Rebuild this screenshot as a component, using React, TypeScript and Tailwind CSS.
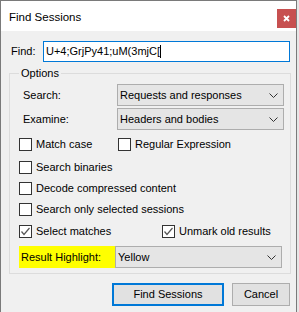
import React from 'react';

type CheckProps = {
  label: string;
  checked?: boolean;
  className?: string;
};

function Check({ label, checked = false, className = '' }: CheckProps) {
  return (
    <div className={`flex items-center h-[13px] ${className}`}>
      <div className="w-[13px] h-[13px] border border-[#333333] bg-white flex items-center justify-center shrink-0">
        {checked && (
          <svg width="11" height="11" viewBox="0 0 11 11">
            <polyline points="1.5,5.5 4,8.5 9.5,2" fill="none" stroke="#555555" strokeWidth="1.2" />
          </svg>
        )}
      </div>
      <span className="ml-[4px] whitespace-nowrap">{label}</span>
    </div>
  );
}

function Chevron() {
  return (
    <svg width="9" height="5" viewBox="0 0 9 5" className="shrink-0">
      <polyline points="0.5,0.5 4.5,4.5 8.5,0.5" fill="none" stroke="#333333" strokeWidth="1" />
    </svg>
  );
}

function Select({ value }: { value: string }) {
  return (
    <div className="w-[167px] h-[22px] border border-[#adadad] bg-[#e5e5e5] pl-[2px] pr-[5px] flex items-center justify-between">
      <span className="whitespace-nowrap">{value}</span>
      <Chevron />
    </div>
  );
}

export default function App() {
  return (
    <div className="w-[299px] h-[312px] bg-[#e6e6e6] overflow-hidden font-['Liberation_Sans',Arial,sans-serif] text-[11px] text-black">
      <div className="w-[297px] h-[312px] border-x border-t border-[#7a7a7a] bg-[#f0f0f0] flex flex-col">
        <div className="h-[30px] bg-white flex items-start shrink-0">
          <span className="pl-[8px] pt-[8px] text-[11.5px]">Find Sessions</span>
          <div className="ml-auto mt-[8px] w-[19px] h-[19px] bg-[#c75050] flex items-center justify-center">
            <svg width="7" height="7" viewBox="0 0 7 7">
              <path d="M1 1 L6 6 M6 1 L1 6" stroke="#ffffff" strokeWidth="1.8" />
            </svg>
          </div>
        </div>

        <div className="mt-[10px] pl-[10px] flex items-center">
          <span className="w-[32px]">Find:</span>
          <div className="w-[247px] h-[21px] border border-[#0078d7] bg-white pl-[2px] flex items-center">
            <span className="whitespace-nowrap">U+4;GrjPy41;uM(3mjC[</span>
            <span className="w-px h-[13px] bg-black" />
          </div>
        </div>

        <fieldset className="mt-[4px] ml-[8px] w-[282px] border border-[#dcdcdc] pl-[9px] pt-[4px] pb-[5px]">
          <legend className="px-[2px] leading-[14px]">Options</legend>

          <div className="flex items-center">
            <span className="w-[98px] pl-[4px]">Search:</span>
            <Select value="Requests and responses" />
          </div>
          <div className="mt-[2px] flex items-center">
            <span className="w-[98px] pl-[4px]">Examine:</span>
            <Select value="Headers and bodies" />
          </div>

          <div className="mt-[8px] flex">
            <Check label="Match case" className="w-[99px]" />
            <Check label="Regular Expression" />
          </div>
          <Check label="Search binaries" className="mt-[10px]" />
          <Check label="Decode compressed content" className="mt-[8px]" />
          <Check label="Search only selected sessions" className="mt-[8px]" />
          <div className="mt-[9px] flex">
            <Check label="Select matches" checked className="w-[143px]" />
            <Check label="Unmark old results" checked />
          </div>

          <div className="mt-[8px] flex items-center">
            <span className="w-[96px] h-[22px] bg-[#ffff00] pl-[2px] flex items-center whitespace-nowrap">
              Result Highlight:
            </span>
            <Select value="Yellow" />
          </div>
        </fieldset>

        <div className="mt-[9px] pr-[6px] flex justify-end gap-[8px]">
          <div className="w-[112px] h-[23px] border-2 border-[#0078d7] bg-[#e1e1e1] flex items-center justify-center">
            Find Sessions
          </div>
          <div className="w-[58px] h-[23px] border border-[#adadad] bg-[#e1e1e1] flex items-center justify-center">
            Cancel
          </div>
        </div>
      </div>
    </div>
  );
}
